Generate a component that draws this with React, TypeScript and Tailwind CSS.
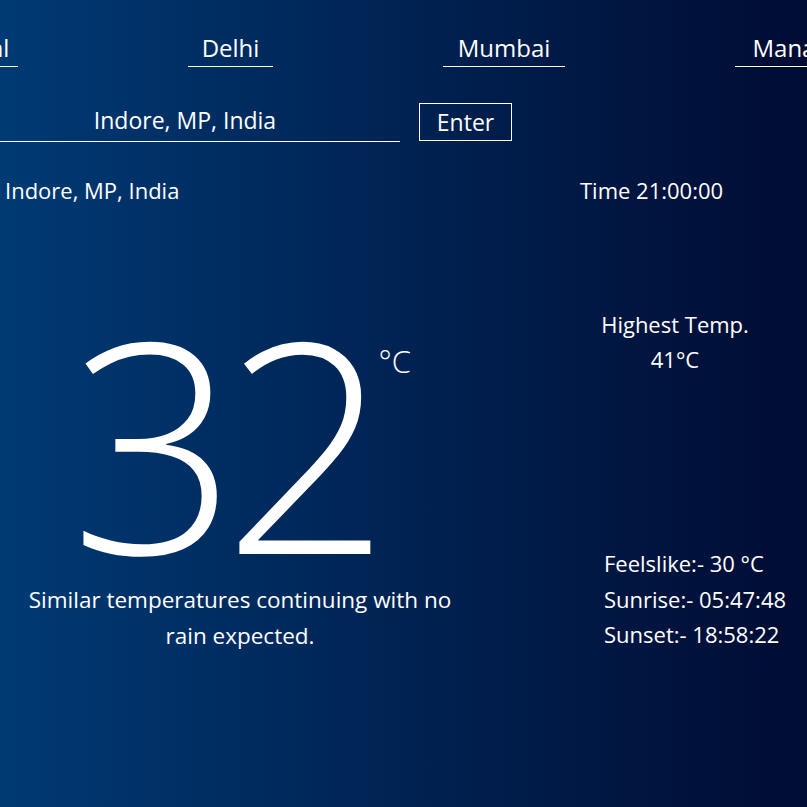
import { useState } from "react";

const cities = [
    { name: "Bhopal", w: "w-[96px]" },
    { name: "Delhi", w: "w-[85px]" },
    { name: "Mumbai", w: "w-[122px]" },
    { name: "Manali", w: "w-[110px]" },
];

export default function App() {
    const [city, setCity] = useState("Indore, MP, India");

    return (
        <main className="h-[807px] w-full overflow-hidden bg-gradient-to-r from-[#003a74] to-[#000c33] text-white font-['Open_Sans',sans-serif]">
            {/* city tabs */}
            <nav className="flex gap-[170px] ml-[-78px] pt-[29px] whitespace-nowrap">
                {cities.map(c => (
                    <div key={c.name} className={`${c.w} shrink-0 border-b border-white text-center text-[24px] leading-[37px]`}>
                        {c.name}
                    </div>
                ))}
            </nav>

            {/* search */}
            <div className="flex items-start mt-[36px]">
                <input
                    value={city}
                    onChange={e => setCity(e.target.value)}
                    className="ml-[-30px] w-[430px] h-[39px] shrink-0 pb-[5px] bg-transparent border-b border-white text-center text-[23px] outline-none"
                />
                <button className="ml-[19px] w-[93px] h-[38px] border border-white text-[23px] leading-[36px]">
                    Enter
                </button>
            </div>

            {/* location + time */}
            <div className="flex mt-[33px] text-[22px] leading-[30px]">
                <p className="w-[580px] pl-[5px]">Indore, MP, India</p>
                <p>Time 21:00:00</p>
            </div>

            <div className="flex">
                {/* left: current temp */}
                <div className="w-[560px] shrink-0 pt-[111px]">
                    <div className="flex items-start pl-[70px]">
                        <span className="text-[293px] leading-[250px] tracking-[-14px] font-light">32</span>
                        <span className="mt-[30px] ml-[2px] text-[31px] leading-[31px] font-light">°C</span>
                    </div>
                    <p className="mt-[16px] w-[480px] text-center text-[22.5px] leading-[36px]">
                        Similar temperatures continuing with no
                        <br />
                        rain expected.
                    </p>
                </div>

                {/* right: details */}
                <div className="w-[230px] shrink-0 pt-[102px] text-[22px] leading-[35px]">
                    <div className="text-center">
                        <p>Highest Temp.</p>
                        <p>41°C</p>
                    </div>
                    <div className="mt-[169px] pl-[44px] leading-[35.5px]">
                        <p>Feelslike:- 30 °C</p>
                        <p>Sunrise:- 05:47:48</p>
                        <p>Sunset:- 18:58:22</p>
                    </div>
                </div>
            </div>
        </main>
    );
}
